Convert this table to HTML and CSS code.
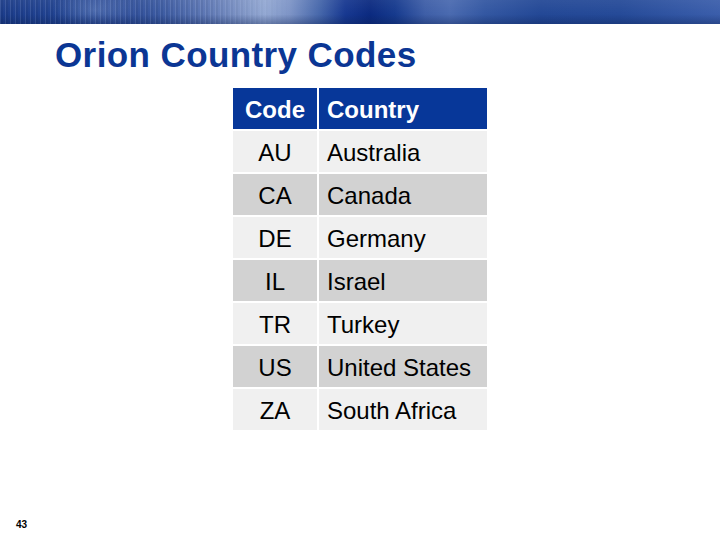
FILE: index.html
```html
<!DOCTYPE html>
<html>
<head>
<meta charset="utf-8">
<link rel="stylesheet" href="styles.css">
</head>
<body>
<div class="slide">
  <div class="banner"><div class="stripes"></div></div>
  <h1 class="title">Orion Country Codes</h1>
  <div class="codes">
    <div class="cell head code">Code</div><div class="cell head name">Country</div>
    <div class="cell light code">AU</div><div class="cell light name">Australia</div>
    <div class="cell dark code">CA</div><div class="cell dark name">Canada</div>
    <div class="cell light code">DE</div><div class="cell light name">Germany</div>
    <div class="cell dark code">IL</div><div class="cell dark name">Israel</div>
    <div class="cell light code">TR</div><div class="cell light name">Turkey</div>
    <div class="cell dark code">US</div><div class="cell dark name">United States</div>
    <div class="cell light code">ZA</div><div class="cell light name">South Africa</div>
  </div>
  <div class="pagenum">43</div>
</div>
</body>
</html>
```
FILE: styles.css
```css
html, body {
  margin: 0;
  padding: 0;
  background: #ffffff;
}
.slide {
  width: 720px;
  height: 540px;
  display: flex;
  flex-direction: column;
  font-family: "Liberation Sans", Arial, sans-serif;
  overflow: hidden;
}
.banner {
  height: 24px;
  flex: none;
  position: relative;
  background:
    linear-gradient(to bottom, rgba(255,255,255,0.06) 0, rgba(255,255,255,0) 60%, rgba(10,30,80,0.35) 100%),
    radial-gradient(ellipse 60px 30px at 95px 10px, rgba(140,170,220,0.35), rgba(140,170,220,0) 70%),
    linear-gradient(to right,
      #1c3d8c 0px, #214392 60px, #2c4b98 110px, #3b5aa2 160px,
      #5d77b5 205px, #8298c8 245px, #93a8d3 265px, #7d94c6 290px,
      #4566aa 320px, #173891 345px, #0b2a80 370px, #163a8e 395px,
      #3e5ea7 425px, #4a6ab0 450px, #3357a2 485px, #234896 540px,
      #254a98 620px, #3458a6 690px, #3b5eab 720px);
}
.stripes {
  position: absolute;
  left: 0;
  top: 0;
  width: 290px;
  height: 24px;
  background: repeating-linear-gradient(to right,
    rgba(255,255,255,0.10) 0px, rgba(255,255,255,0.10) 1px,
    rgba(0,0,0,0.05) 1px, rgba(0,0,0,0.05) 3px,
    rgba(255,255,255,0) 3px, rgba(255,255,255,0) 5px);
  -webkit-mask-image: linear-gradient(to right, #000 0, #000 70%, transparent 100%);
  mask-image: linear-gradient(to right, #000 0, #000 70%, transparent 100%);
}
.title {
  margin: 11px 0 0 55px;
  font-size: 35px;
  line-height: 40px;
  font-weight: bold;
  letter-spacing: 0.4px;
  color: #0b3694;
}
.codes {
  margin: 13px 0 0 233px;
  width: 254px;
  display: grid;
  grid-template-columns: 84px 168px;
  grid-template-rows: 41px repeat(7, 41px);
  column-gap: 2px;
  row-gap: 2px;
  font-size: 24px;
}
.cell {
  display: flex;
  align-items: center;
  padding-top: 3px;
  box-sizing: border-box;
  color: #000000;
}
.code {
  justify-content: center;
}
.name {
  padding-left: 8px;
}
.head {
  background: #073799;
  color: #ffffff;
  font-weight: bold;
}
.light {
  background: #f0f0f0;
}
.dark {
  background: #d2d2d2;
}
.pagenum {
  margin-top: auto;
  margin-bottom: 9px;
  margin-left: 16px;
  font-size: 10px;
  line-height: 12px;
  font-weight: bold;
  color: #000000;
}
```
